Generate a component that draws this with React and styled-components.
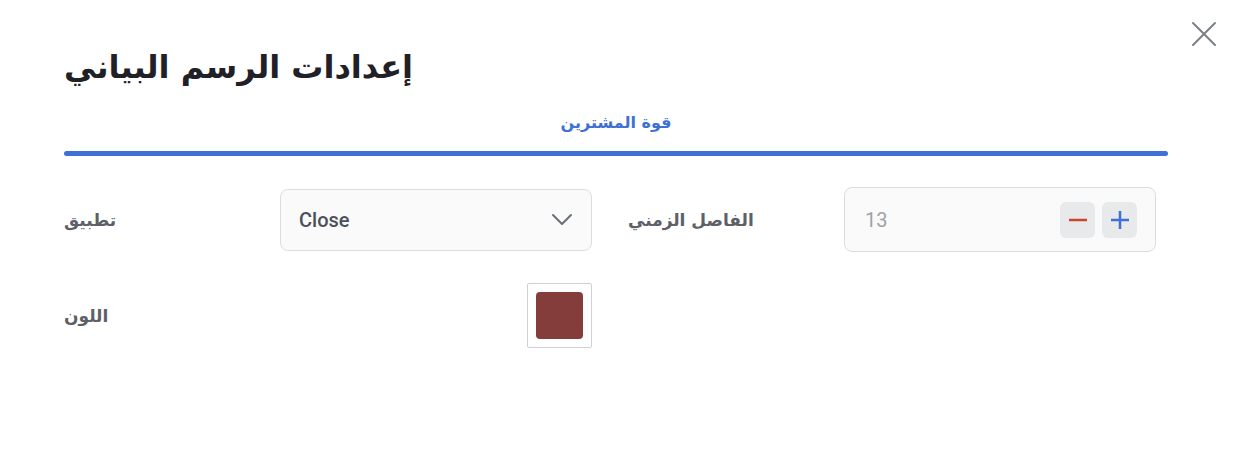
import styled, { createGlobalStyle } from "styled-components";

const GlobalStyle = createGlobalStyle`
  body {
    margin: 0;
    background: #fff;
    font-family: Roboto, "DejaVu Sans", sans-serif;
  }
`;

const Dialog = styled.div`
  position: relative;
  width: 1242px;
  height: 464px;
  box-sizing: border-box;
  padding: 42px 74px 0 64px;
  background: #fff;
`;

const CloseButton = styled.button`
  position: absolute;
  top: 20px;
  right: 24px;
  width: 28px;
  height: 28px;
  padding: 0;
  border: 0;
  background: transparent;
  color: #7b8089;
  cursor: pointer;
`;

const Title = styled.h2`
  margin: 0;
  font-family: "DejaVu Sans", sans-serif;
  font-size: 32px;
  font-weight: 700;
  line-height: 50px;
  color: #1f2126;
`;

const Tabs = styled.div`
  margin-top: 18px;
  display: flex;
  flex-direction: column;
  align-items: stretch;
`;

const TabLabel = styled.div`
  text-align: center;
  font-family: "DejaVu Sans", sans-serif;
  font-size: 16px;
  font-weight: 600;
  line-height: 26px;
  color: #3e70d6;
  padding-bottom: 15px;
`;

const TabBar = styled.div`
  height: 5px;
  border-radius: 3px;
  background: #3e70d6;
`;

const Grid = styled.div`
  margin-top: 31px;
  display: grid;
  grid-template-columns: repeat(2, 528px);
  column-gap: 36px;
  row-gap: 31px;
`;

const Field = styled.div`
  display: grid;
  grid-template-columns: 216px 312px;
  align-items: center;
`;

const Label = styled.label`
  font-family: "DejaVu Sans", sans-serif;
  font-size: 17px;
  font-weight: 600;
  color: #5d6067;
`;

const Control = styled.div`
  display: flex;
  align-items: center;
  justify-content: space-between;
  box-sizing: border-box;
  height: ${(p) => p.$height || 62}px;
  padding: ${(p) => p.$padding || "0 18px"};
  border: 1px solid #dcdde0;
  border-radius: 8px;
  background: #fafafa;
`;

const SelectText = styled.span`
  font-size: 20px;
  font-weight: 500;
  color: #4c5058;
`;

const NumberText = styled.span`
  font-size: 20px;
  color: #9ea2a9;
`;

const Steppers = styled.div`
  display: flex;
  gap: 7px;
`;

const StepButton = styled.button`
  width: 35px;
  height: 36px;
  padding: 0;
  display: flex;
  align-items: center;
  justify-content: center;
  border: 0;
  border-radius: 6px;
  background: #e8e9eb;
  color: ${(p) => p.$color};
`;

const ColorCell = styled.div`
  display: flex;
  justify-content: flex-end;
`;

const ColorFrame = styled.div`
  box-sizing: border-box;
  width: 65px;
  height: 65px;
  padding: 8px;
  border: 1px solid #cfd0d3;
  border-radius: 2px;
  background: #fff;
`;

const Swatch = styled.div`
  width: 100%;
  height: 100%;
  border-radius: 4px;
  background: ${(p) => p.$color};
`;

export default function App() {
  return (
    <Dialog>
      <GlobalStyle />
      <CloseButton aria-label="close">
        <svg width="28" height="28" viewBox="0 0 28 28" fill="none" stroke="currentColor" strokeWidth="2" strokeLinecap="round">
          <path d="M3 3 L25 25 M25 3 L3 25" />
        </svg>
      </CloseButton>
      <Title>إعدادات الرسم البياني</Title>
      <Tabs>
        <TabLabel>قوة المشترين</TabLabel>
        <TabBar />
      </Tabs>
      <Grid>
        <Field>
          <Label>تطبيق</Label>
          <Control>
            <SelectText>Close</SelectText>
            <svg width="22" height="14" viewBox="0 0 22 14" fill="none" stroke="#6b6f77" strokeWidth="2" strokeLinecap="round" strokeLinejoin="round">
              <path d="M2 2 L11 11 L20 2" />
            </svg>
          </Control>
        </Field>
        <Field>
          <Label>الفاصل الزمني</Label>
          <Control $height={65} $padding="0 18px 0 20px">
            <NumberText>13</NumberText>
            <Steppers>
              <StepButton $color="#c9472b" aria-label="decrease">
                <svg width="22" height="22" viewBox="0 0 22 22" stroke="currentColor" strokeWidth="2.5">
                  <path d="M2 11 H20" />
                </svg>
              </StepButton>
              <StepButton $color="#3e70d6" aria-label="increase">
                <svg width="22" height="22" viewBox="0 0 22 22" stroke="currentColor" strokeWidth="2.5">
                  <path d="M2 11 H20 M11 2 V20" />
                </svg>
              </StepButton>
            </Steppers>
          </Control>
        </Field>
        <Field>
          <Label>اللون</Label>
          <ColorCell>
            <ColorFrame>
              <Swatch $color="#843d3a" />
            </ColorFrame>
          </ColorCell>
        </Field>
      </Grid>
    </Dialog>
  );
}
